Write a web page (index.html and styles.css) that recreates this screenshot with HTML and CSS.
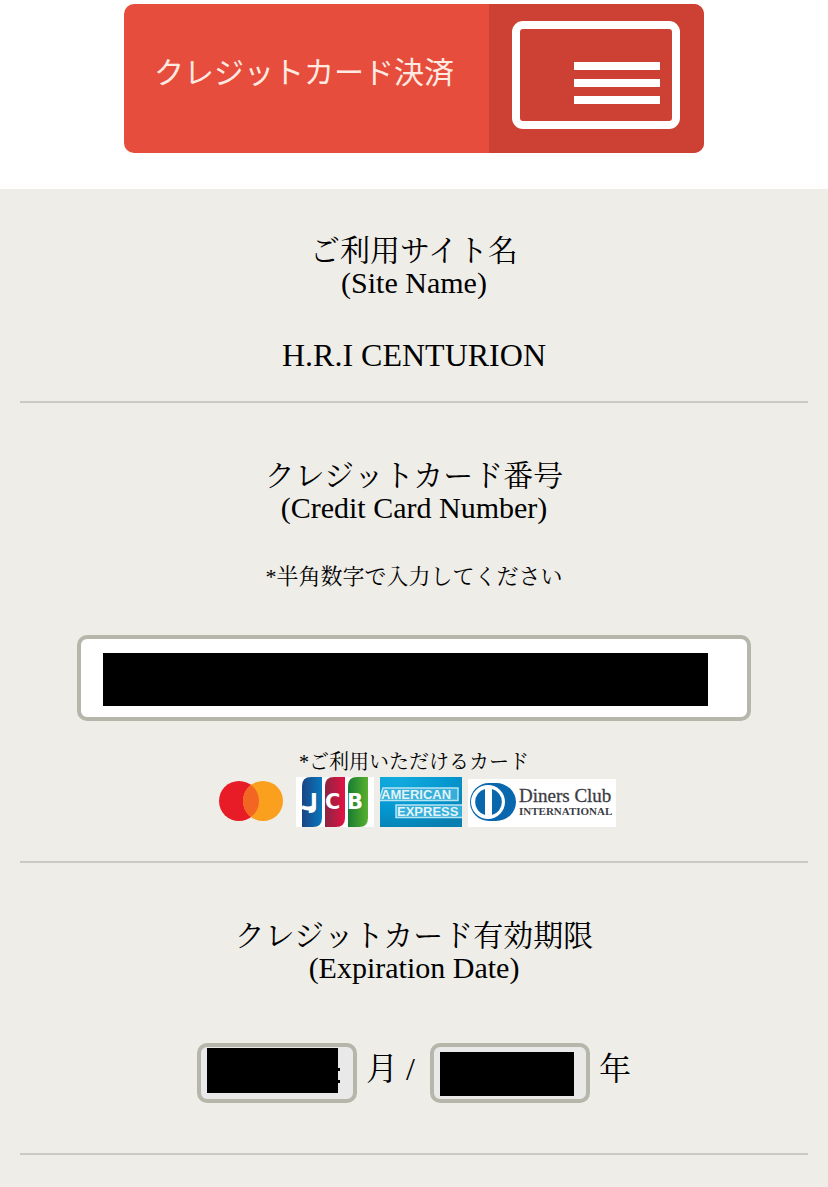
FILE: index.html
```html
<!DOCTYPE html>
<html lang="ja">
<head>
    <meta charset="UTF-8">
    <meta name="viewport" content="width=device-width, initial-scale=1.0">
    <title>クレジットカード決済</title>
    <link rel="stylesheet" href="styles.css">
</head>
<body>
    <!-- ヘッダー -->
    <header class="header">
        <div class="banner">
            <h1 class="banner-title">クレジットカード決済</h1>
            <div class="banner-icon">
                <svg width="170" height="110" viewBox="0 0 170 110" aria-hidden="true">
                    <rect x="4" y="5" width="160" height="100" rx="7" fill="none" stroke="#fff" stroke-width="8"/>
                    <path d="M62 46h86M62 63h86M62 80h86" stroke="#fff" stroke-width="8"/>
                </svg>
            </div>
        </div>
    </header>

    <form class="payment-form">
        <!-- サイト名 -->
        <section class="section section-first">
            <h2 class="section-title">ご利用サイト名<br>(Site Name)</h2>
            <p class="site-name">H.R.I CENTURION</p>
        </section>

        <!-- カード番号 -->
        <section class="section">
            <h2 class="section-title"><label for="cardNumber">クレジットカード番号<br>(Credit Card Number)</label></h2>
            <p class="hint">*半角数字で入力してください</p>
            <div class="field card-field">
                <input type="text" class="control card-number" id="cardNumber" inputmode="numeric">
                <span class="mask"></span>
            </div>
            <p class="card-note">*ご利用いただけるカード</p>
            <div class="card-list">
                <svg width="78" height="50" viewBox="0 0 78 50" role="img" aria-label="Mastercard">
                    <circle cx="27" cy="24" r="20" fill="#e81c27"/>
                    <circle cx="51" cy="24" r="20" fill="#faa01e"/>
                    <path d="M39 8a20 20 0 0 1 0 32a20 20 0 0 1 0-32z" fill="#f26522"/>
                </svg>
                <svg width="78" height="50" viewBox="0 0 78 50" role="img" aria-label="JCB">
                    <defs>
                        <linearGradient id="jcbBlue"><stop offset="0" stop-color="#1b4484"/><stop offset="1" stop-color="#0878bd"/></linearGradient>
                        <linearGradient id="jcbRed"><stop offset="0" stop-color="#8b2540"/><stop offset="1" stop-color="#e31245"/></linearGradient>
                        <linearGradient id="jcbGreen"><stop offset="0" stop-color="#187d32"/><stop offset="1" stop-color="#58b02f"/></linearGradient>
                    </defs>
                    <path fill="#fff" d="M0 0h78v50H0z"/>
                    <path fill="url(#jcbBlue)" d="M15 0h11v41q0 9-9 9H6V9q0-9 9-9z"/>
                    <path fill="url(#jcbRed)" d="M38 0h11v41q0 9-9 9H29V9q0-9 9-9z"/>
                    <path fill="url(#jcbGreen)" d="M61 0h11v41q0 9-9 9H52V9q0-9 9-9z"/>
                    <path d="M6 30q7 3 11 0" fill="none" stroke="#fff" stroke-width="4"/>
                    <text class="jcb-text" x="14" y="32">J</text>
                    <text class="jcb-text" x="29" y="32">C</text>
                    <text class="jcb-text" x="51" y="32">B</text>
                </svg>
                <svg width="82" height="50" viewBox="0 0 82 50" role="img" aria-label="American Express">
                    <defs>
                        <radialGradient id="amexBlue" cx="0.2" cy="0" r="1.1"><stop offset="0" stop-color="#13acdf"/><stop offset="0.6" stop-color="#0497cf"/><stop offset="1" stop-color="#087fb0"/></radialGradient>
                    </defs>
                    <path fill="url(#amexBlue)" d="M0 0h82v50H0z"/>
                    <path fill="#35afd9" stroke="#b9e4f3" stroke-width="1.5" d="M-1 23.500L3 11h75v12.500zM16 28h67v12.500H16z"/>
                    <text class="amex-text" x="1" y="22">AMERICAN</text>
                    <text class="amex-text" x="17" y="39">EXPRESS</text>
                </svg>
                <svg width="148" height="48" viewBox="0 0 148 48" role="img" aria-label="Diners Club International">
                    <path fill="#fff" d="M0 0h148v48H0z"/>
                    <path fill="#0967ae" d="M21 4h7a20 19 0 0 1 0 38h-7a19 19 0 0 1 0-38z"/>
                    <circle cx="20" cy="23" r="17" fill="#fff"/>
                    <path fill="#0967ae" d="M17 10v26a13.500 13.500 0 0 1 0-26zM24 10a13.500 13.500 0 0 1 0 26z"/>
                    <text class="diners-text" x="51" y="23">Diners Club</text>
                    <text class="diners-sub" x="51" y="36">INTERNATIONAL</text>
                </svg>
            </div>
        </section>

        <!-- 有効期限 -->
        <section class="section">
            <h2 class="section-title">クレジットカード有効期限<br>(Expiration Date)</h2>
            <div class="expiry">
                <div class="field month-field">
                    <select class="control expiry-select" id="month"><option></option></select>
                    <span class="mask"></span>
                </div>
                <label class="unit" for="month">月 /</label>
                <div class="field year-field">
                    <select class="control expiry-select" id="year"><option></option></select>
                    <span class="mask"></span>
                </div>
                <label class="unit" for="year">年</label>
            </div>
        </section>
    </form>
</body>
</html>
```
FILE: styles.css
```css
* {
    margin: 0;
    padding: 0;
    box-sizing: border-box;
}

body {
    font-family: "Liberation Serif", "Noto Serif CJK JP", "Noto Sans CJK JP", serif;
    font-weight: 400;
    color: #000;
    background-color: #eeede8;
    min-height: 100vh;
}

/* ヘッダー */
.header {
    background-color: #fff;
    padding: 4px 20px 36px;
}

.banner {
    display: flex;
    width: 100%;
    max-width: 580px;
    min-height: 149px;
    margin: 0 auto;
    border-radius: 10px;
    background-color: #e64d3c;
    overflow: hidden;
}

.banner-title {
    flex: 1;
    padding: 46px 0 0 30px;
    font-family: "Noto Sans CJK JP", sans-serif;
    font-size: 30px;
    font-weight: 400;
    line-height: 40px;
    color: #ffeae2;
}

.banner-icon {
    width: 215px;
    padding: 16px 0 0 23px;
    background-color: #cc4134;
}

/* フォーム */
.payment-form {
    padding: 0 20px;
    text-align: center;
}

.section {
    padding: 57px 0 34px;
    border-bottom: 2px solid #c9c9c5;
}

.section-first {
    padding: 46px 0 28px;
}

.section-title {
    font-size: 30px;
    font-weight: 400;
    line-height: 32px;
}

.site-name {
    margin-top: 38px;
    font-size: 32px;
    line-height: 36px;
}

.hint {
    margin-top: 41px;
    font-size: 22px;
    line-height: 24px;
}

/* 入力欄 */
.field {
    position: relative;
}

.control {
    display: block;
    width: 100%;
    border: 4px solid #b6b7aa;
    border-radius: 10px;
    font-family: inherit;
    font-size: 32px;
}

.card-field {
    margin: 46px 57px 0;
}

.card-number {
    height: 86px;
    padding: 0 22px;
    background-color: #fff;
}

.mask {
    position: absolute;
    background-color: #000;
    pointer-events: none;
}

.card-field .mask {
    inset: 18px 43px 15px 26px;
}

/* 使えるカード */
.card-note {
    margin-top: 29px;
    font-size: 20px;
    line-height: 24px;
}

.card-list {
    display: flex;
    justify-content: center;
    align-items: flex-end;
    gap: 6px;
    margin-top: 3px;
}

.jcb-text {
    font: bold 21px "DejaVu Sans", sans-serif;
    fill: #fff;
}

.amex-text {
    font: bold 13px "Liberation Sans", sans-serif;
    fill: #e2f4fa;
}

.diners-text {
    font: 19px "Liberation Serif", serif;
    fill: #3c3c44;
    stroke: #3c3c44;
    stroke-width: 0.3px;
}

.diners-sub {
    font: bold 11px "Liberation Serif", serif;
    fill: #3c3c44;
}

/* 有効期限 */
.expiry {
    display: flex;
    justify-content: center;
    align-items: center;
    margin: 59px 0 16px;
}

.expiry .field {
    width: 160px;
}

.expiry-select {
    height: 60px;
    appearance: none;
    background-color: #e9e9ea;
}

.unit {
    padding: 0 0 8px 9px;
    font-size: 32px;
    line-height: 36px;
}

.year-field {
    margin-left: 15px;
}

.month-field .mask {
    inset: 5px 19px 10px 10px;
}

.month-field .mask::after {
    content: "";
    position: absolute;
    top: 20px;
    left: 100%;
    width: 2px;
    height: 9px;
    border: solid #000;
    border-width: 3px 0;
}

.year-field .mask {
    inset: 9px 16px 7px 10px;
}
```
